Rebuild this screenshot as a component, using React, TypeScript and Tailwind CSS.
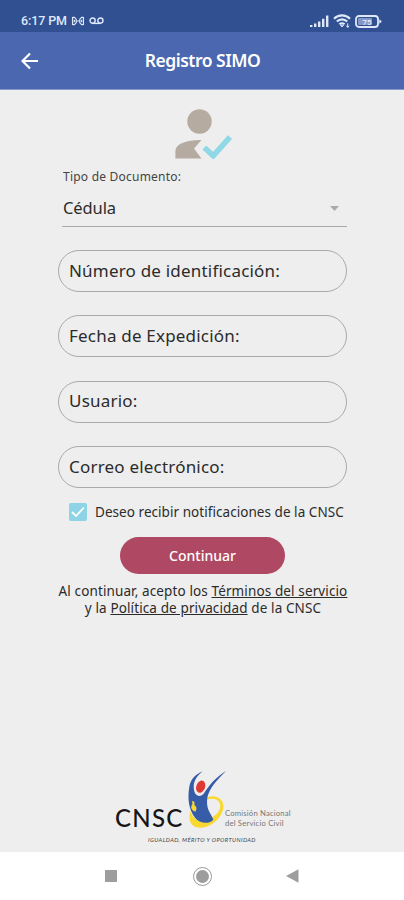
import React from 'react';

const fields = [
    'Número de identificación:',
    'Fecha de Expedición:',
    'Usuario:',
    'Correo electrónico:'
];

const StatusBar: React.FC = () => (
    <div className="h-8 bg-[#305091] flex items-center justify-between pl-[21px] pr-[22px] pt-[10px] text-[#dfe8fb]">
        <div className="flex items-center">
            <span className="font-[Roboto] text-[12.5px] leading-[14px] font-medium tracking-[-0.1px] w-[47px] whitespace-nowrap">6:17 PM</span>
            <svg className="ml-[3px]" width="14" height="10" viewBox="0 0 14 11" fill="none" stroke="currentColor" strokeWidth="1.3">
                <path d="M1 1v9M1 1.5h2l2 2v4l-2 2H1M13 1v9M13 1.5h-2l-2 2v4l2 2h2M5 5.5h4M3 4v3M11 4v3" />
            </svg>
            <svg className="ml-[4px]" width="15" height="8" viewBox="0 0 15 8" fill="none" stroke="currentColor" strokeWidth="1.4">
                <circle cx="3.6" cy="3.6" r="2.6" />
                <circle cx="11.4" cy="3.6" r="2.6" />
                <path d="M3.6 6.4h7.8" />
            </svg>
        </div>
        <div className="flex items-center">
            <svg width="19" height="12" viewBox="0 0 19 12" fill="currentColor">
                <path d="M0 10h2.4v2H0zM4 8.5h2.4V12H4zM8 6.5h2.4V12H8zM12 3.7h2.4V12H12zM16 .5h2.4V12H16z" />
            </svg>
            <svg className="ml-[4px]" width="18" height="14" viewBox="0 0 18 14" fill="none" stroke="currentColor" strokeWidth="2.1">
                <path d="M1 4.8C5.5.2 12.5.2 17 4.8M3.8 7.6c3-3 7.4-3 10.4 0M6.4 10.3c1.5-1.5 3.7-1.5 5.2 0" />
                <path d="M7.5 11.2 9 13l1.5-1.8zM14.7 9.4v4M13.2 11.7l1.5 1.7 1.5-1.7" strokeWidth="1" />
            </svg>
            <svg className="ml-[4px]" width="27" height="13" viewBox="0 0 27 13">
                <rect x="1" y="1" width="22" height="11" rx="3" fill="none" stroke="currentColor" strokeWidth="1.8" />
                <rect x="3" y="3" width="14" height="7" rx="1" fill="#8298c8" />
                <path d="M24.3 4.2 26.5 6v1l-2.2 1.8z" fill="currentColor" />
                <text x="12" y="9.5" textAnchor="middle" fontSize="8" fontWeight="500" fontFamily="Roboto" fill="#e6edfc">75</text>
            </svg>
        </div>
    </div>
);

const Header: React.FC = () => (
    <header className="h-[58px] bg-[#4a67af] border-b border-[#8799c8] grid grid-cols-[60px_1fr_60px] items-center">
        <button className="pl-[21px] text-white">
            <svg width="18" height="18" viewBox="0 0 18 18" fill="none" stroke="currentColor" strokeWidth="2.2">
                <path d="M17 9H2M9 1.5 1.5 9 9 16.5" />
            </svg>
        </button>
        <h1 className="pl-[1px] text-center text-white text-[17.5px] font-semibold tracking-[-0.5px] whitespace-nowrap">Registro SIMO</h1>
    </header>
);

const UserCheck: React.FC = () => (
    <svg className="ml-[174px]" width="58" height="50" viewBox="0 0 58 50">
        <circle cx="25.5" cy="12.5" r="12.2" fill="#b5aba1" />
        <path d="M1.4 49.5V41.5C2 34 15 30.5 27.5 31L20 39.5l7.5 10z" fill="#b5aba1" />
        <path d="M30.3 38.5l8.9 8.3L56 28" fill="none" stroke="#91d8e6" strokeWidth="5.6" />
    </svg>
);

const Logo: React.FC = () => (
    <div className="w-[178px] ml-[115px]">
        <div className="flex items-end h-[62px]">
            <span className="font-[Lato] text-[24px] leading-[28px] font-medium tracking-[1.3px] text-[#161616] w-[71px] whitespace-nowrap">CNSC</span>
            <svg className="ml-[1px] mb-[4px] shrink-0" width="40" height="58" viewBox="244 17 120 174">
                {/* yellow swoosh */}
                <path fillRule="evenodd" fill="#f9d832" d="M302 101C325 89 351 100 353 123C355 153 323 187 287 190C258 192 245 171 254 140C261 163 278 174 302 167C328 159 348 139 343 119C339 105 321 99 302 107z" />
                {/* figure */}
                <path fill="#365ba7" d="M291 21C263 43 260 65 268 87C276 98 287 97 295 87C309 65 329 39 361 20C328 52 303 82 304 112C304 139 316 146 323 166C307 182 281 176 268 160C249 135 245 101 251 67C255 45 269 30 291 21z" />
                <ellipse cx="285" cy="67" rx="13" ry="19" transform="rotate(20 285 67)" fill="#df3935" />
                <path fill="#f9d832" d="M259 110c7 0 9 5 7 12 8 5 8 13 3 20-8-2-14-10-12-17 5-4 3-9 2-15z" />
            </svg>
            <p className="ml-[-2px] mb-[4px] font-[Lato] text-[7.7px] leading-[10px] tracking-[0.18px] text-[#777] whitespace-nowrap">
                Comisión Nacional<br />del Servicio Civil
            </p>
        </div>
        <p className="ml-[33px] mt-[4px] font-[Lato] italic text-[5.8px] leading-[8px] tracking-[0.4px] text-[#444] whitespace-nowrap">IGUALDAD, MÉRITO Y OPORTUNIDAD</p>
    </div>
);

const NavBar: React.FC = () => (
    <nav className="h-12 bg-white flex items-center justify-between pl-[105px] pr-[105px]">
        <div className="w-3 h-3 bg-[#9d9d9d]" />
        <div className="w-[19px] h-[19px] ml-[2px] rounded-full border border-[#999] p-[2px]">
            <div className="w-full h-full rounded-full bg-[#9d9d9d]" />
        </div>
        <svg width="13" height="14" viewBox="0 0 13 14" fill="#9d9d9d">
            <path d="M0 7 12.5.3v13.4z" />
        </svg>
    </nav>
);

export default function App() {
    return (
        <div className="w-[404px] h-[900px] bg-[#eeeeee] flex flex-col overflow-hidden font-['Noto_Sans',sans-serif] text-[#2b2b2b]">
            <StatusBar />
            <Header />

            <main className="flex-1 flex flex-col pt-[19px]">
                <UserCheck />

                {/* Document type */}
                <div className="ml-[62px] mr-[57px] h-[68px] border-b border-[#aaa]">
                    <p className="pl-[1px] pt-[9px] text-[12px] leading-[18px] tracking-[0.22px] text-[#444]">Tipo de Documento:</p>
                    <div className="flex items-center justify-between h-[45px] pl-[1px] pr-2 pb-[1px]">
                        <span className="text-[16.5px] tracking-[-0.1px]">Cédula</span>
                        <svg width="9" height="5" viewBox="0 0 9 5" fill="#aaa"><path d="M0 0h9L4.5 5z" /></svg>
                    </div>
                </div>

                {/* Inputs */}
                <div className="ml-[58px] mr-[57px] mt-[23px] flex flex-col gap-[23.3px]">
                    {fields.map((label) => (
                        <div key={label} className="h-[42px] rounded-full border border-[#aaa] flex items-center pl-[10px] pb-[1px] text-[17px] tracking-[0.2px] whitespace-nowrap">
                            {label}
                        </div>
                    ))}
                </div>

                <label className="ml-[69px] mt-[14px] h-5 flex items-center text-[13.5px] tracking-[0.05px] whitespace-nowrap">
                    <span className="w-[18px] h-[18px] rounded-[2px] bg-[#8dd5e6] mr-[8px] flex items-center justify-center">
                        <svg width="14" height="12" viewBox="0 0 14 12" fill="none" stroke="#fff" strokeWidth="1.8"><path d="M1 6l4 4 8-8.5" /></svg>
                    </span>
                    Deseo recibir notificaciones de la CNSC
                </label>

                <button className="mx-auto mt-[15px] w-[165px] h-[37px] rounded-full bg-[#af4863] text-white text-[14px] font-medium pl-[1px]">
                    Continuar
                </button>

                <p className="mt-[9px] pl-[2px] text-center text-[13.5px] leading-[17px] tracking-[0.12px] whitespace-nowrap">
                    Al continuar, acepto los <span className="underline">Términos del servicio</span><br />
                    y la <span className="underline">Política de privacidad</span> de la CNSC
                </p>

                <div className="mt-auto mb-[8px]">
                    <Logo />
                </div>
            </main>

            <NavBar />
        </div>
    );
}
